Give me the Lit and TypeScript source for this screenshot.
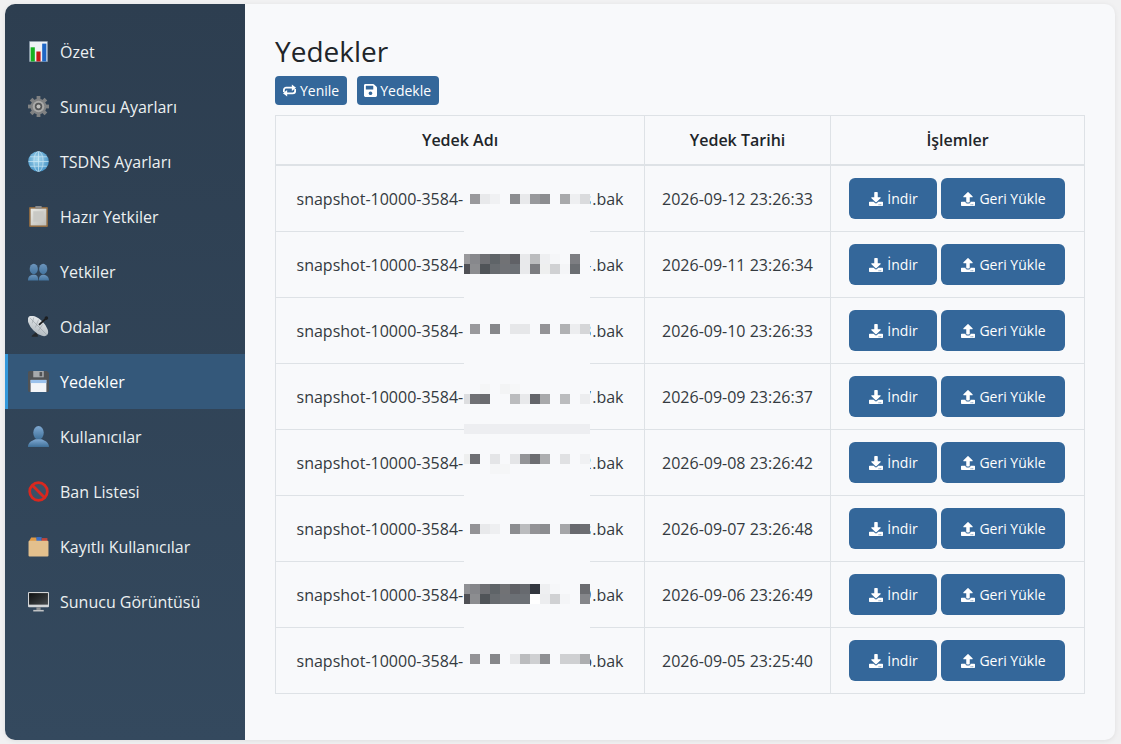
import { LitElement, html, css, svg } from "lit";
import { customElement } from "lit/decorators.js";

const I = {
  retweet: svg`<g fill="none" stroke="#fff" stroke-width="1.9"><path d="M2 9.500V7.500A2.500 2.500 0 0 1 4.500 5H11.500"/><path d="M14 6.500V8.500A2.500 2.500 0 0 1 11.500 11H4.500"/></g><path d="M10.500 1.500L15 5l-4.500 3.500zM5.500 7.500L1 11l4.500 3.500z" fill="#fff"/>`,
  save: svg`<path transform="scale(.0312)" d="M433.941 129.941l-83.882-83.882A48 48 0 0 0 316.118 32H48C21.49 32 0 53.49 0 80v352c0 26.51 21.49 48 48 48h352c26.51 0 48-21.49 48-48V163.882a48 48 0 0 0-14.059-33.941zM224 416c-35.346 0-64-28.654-64-64 0-35.346 28.654-64 64-64s64 28.654 64 64c0 35.346-28.654 64-64 64zm96-304.520V212c0 6.627-5.373 12-12 12H76c-6.627 0-12-5.373-12-12V108c0-6.627 5.373-12 12-12h228.520c3.183 0 6.235 1.264 8.485 3.515l3.480 3.480A11.996 11.996 0 0 1 320 111.480z"/>`,
  download: svg`<path transform="scale(.03125)" d="M216 0h80c13.300 0 24 10.700 24 24v168h87.700c17.800 0 26.700 21.500 14.100 34.100L269.700 378.300c-7.500 7.500-19.800 7.500-27.300 0L90.100 226.100c-12.600-12.600-3.700-34.100 14.100-34.100H192V24c0-13.300 10.700-24 24-24zm296 376v112c0 13.300-10.700 24-24 24H24c-13.300 0-24-10.700-24-24V376c0-13.300 10.700-24 24-24h146.700l49 49c20.100 20.100 52.500 20.100 72.600 0l49-49H488c13.300 0 24 10.700 24 24zm-124 88c0-11-9-20-20-20s-20 9-20 20 9 20 20 20 20-9 20-20zm64 0c0-11-9-20-20-20s-20 9-20 20 9 20 20 20 20-9 20-20z"/>`,
  upload: svg`<path transform="scale(.03125)" d="M296 384h-80c-13.300 0-24-10.700-24-24V192h-87.700c-17.800 0-26.700-21.500-14.100-34.100L242.300 5.700c7.500-7.500 19.800-7.500 27.300 0l152.200 152.200c12.600 12.600 3.700 34.100-14.100 34.100H320v168c0 13.300-10.700 24-24 24zm216-8v112c0 13.300-10.700 24-24 24H24c-13.300 0-24-10.700-24-24V376c0-13.300 10.700-24 24-24h136v8c0 30.900 25.100 56 56 56h80c30.900 0 56-25.100 56-56v-8h136c13.300 0 24 10.700 24 24zm-124 88c0-11-9-20-20-20s-20 9-20 20 9 20 20 20 20-9 20-20zm64 0c0-11-9-20-20-20s-20 9-20 20 9 20 20 20 20-9 20-20z"/>`,
};

const gearTeeth = [0, 45, 90, 135, 180, 225, 270, 315];

const defs = svg`<defs>
  <linearGradient id="person" x1="0" y1="0" x2="0" y2="1"><stop offset="0" stop-color="#7fa9d2"/><stop offset="1" stop-color="#3f7099"/></linearGradient>
  <linearGradient id="people" x1="0" y1="0" x2="0" y2="1"><stop offset="0" stop-color="#6d96bd"/><stop offset="1" stop-color="#44749f"/></linearGradient>
  <radialGradient id="globe" cx=".45" cy=".4" r=".65"><stop offset="0" stop-color="#a9d9ef"/><stop offset="1" stop-color="#3f8fc4"/></radialGradient>
  <linearGradient id="dish" x1="0" y1="0" x2="1" y2="1"><stop offset="0" stop-color="#eef1f3"/><stop offset="1" stop-color="#a9b2b8"/></linearGradient>
  <linearGradient id="paper" x1="0" y1="0" x2="1" y2="1"><stop offset="0" stop-color="#e9e9e4"/><stop offset="1" stop-color="#bcbcb8"/></linearGradient>
  <linearGradient id="screen" x1="0" y1="0" x2="1" y2="1"><stop offset="0" stop-color="#0e1011"/><stop offset="1" stop-color="#45494c"/></linearGradient>
</defs>`;

const nav: [string, unknown][] = [
  ["Özet", svg`<rect x="1" y="0" width="18" height="20" fill="#eef2f6"/><rect x="1.300" y=".3" width="17.400" height="19.400" fill="none" stroke="#66788a" stroke-width=".7"/><rect x="2.500" y="6" width="4" height="13.500" fill="#17b022"/><rect x="8" y="10" width="4" height="9.500" fill="#c71818"/><rect x="13.500" y="2.500" width="4" height="17" fill="#1f66c4"/>`],
  ["Sunucu Ayarları", svg`<g fill="#808283">${gearTeeth.map((a) => svg`<rect x="8.200" y="0" width="3.600" height="5" transform="rotate(${a} 10 10)"/>`)}<circle cx="10" cy="10" r="7.500"/></g><circle cx="10" cy="10" r="5.500" fill="#a9a9a7"/><circle cx="10" cy="10" r="3.500" fill="#535556"/><circle cx="10" cy="10" r="1.900" fill="#bfbfbd"/>`],
  ["TSDNS Ayarları", svg`<circle cx="10" cy="10" r="9.800" fill="url(#globe)"/><g fill="none" stroke="#d8eef8" stroke-width=".8" opacity=".75"><ellipse cx="10" cy="10" rx="4.400" ry="9.600"/><path d="M10 .5v19M.5 10h19M2 5.500h16M2 14.500h16"/></g>`],
  ["Hazır Yetkiler", svg`<rect x="1" y="1" width="18" height="19" rx="1" fill="#8e6b43"/><rect x="2.500" y="2.500" width="15" height="16" fill="url(#paper)"/><rect x="5" y="5" width="10" height="10" fill="#c9c9c5"/><rect x="7" y="0" width="6" height="2.500" fill="#8d8d8d"/>`],
  ["Yetkiler", svg`<g fill="url(#people)"><ellipse cx="5.500" cy="7.500" rx="3.900" ry="5"/><ellipse cx="14.500" cy="7.500" rx="3.900" ry="5"/><path d="M0 18.500c0-4 2.500-5.500 5.500-5.500S9.700 14.500 9.700 18.500zM10.300 18.500c0-4 2-5.500 4.200-5.500S20 14.500 20 18.500z"/></g>`],
  ["Odalar", svg`<path d="M8 15l-3.500 3.200c-1 .6-1.300 1.300-.8 1.600h5.600c.6-.5-.4-3.300-1.300-4.800z" fill="#25282b"/><ellipse cx="9.500" cy="9.500" rx="12.300" ry="6" transform="rotate(45 9.500 9.500)" fill="url(#dish)"/><g fill="none" stroke="#8f989e" stroke-width=".5"><path d="M2 2l16 16M5.500 1.500L4 7M10 3.500L7 11M14 8l-4 6"/></g><path d="M10.500 8.500L17 2.500" stroke="#1c1e20" stroke-width="1.700"/><circle cx="17.500" cy="2" r="1.700" fill="#1c1e20"/>`],
  ["Yedekler", svg`<path d="M0 1.500C0 .7.700 0 1.500 0H18l2 2v16.500c0 .8-.7 1.500-1.500 1.500h-17C.7 20 0 19.300 0 18.500z" fill="#505356"/><rect x="5" y="0" width="10" height="6" fill="#a6a9ac"/><rect x="11" y="1" width="2.500" height="4" fill="#505356"/><rect x="2.500" y="8.500" width="15" height="11.500" fill="#f3f5f8"/><rect x="2.500" y="8.500" width="15" height="3" fill="#9cc2ec"/>`],
  ["Kullanıcılar", svg`<g fill="url(#person)"><ellipse cx="10" cy="6.500" rx="5" ry="6.500"/><path d="M0 20c0-5 4-6 7-7.500h6C16 14 20 15 20 20z"/></g>`],
  ["Ban Listesi", svg`<circle cx="10" cy="10" r="8.400" fill="#3a5166" stroke="#d8281f" stroke-width="2.600"/><path d="M4.100 4.100l11.800 11.800" stroke="#d8281f" stroke-width="2.600"/>`],
  ["Kayıtlı Kullanıcılar", svg`<path d="M1 5l2-3.500h5L9 5z" fill="#e09a45"/><rect x="8" y="1" width="5" height="4" fill="#3b6fc4"/><rect x="13" y="2" width="5.500" height="3" fill="#c0463c"/><rect x=".5" y="4.500" width="19" height="15" rx="1" fill="#e3c08d"/>`],
  ["Sunucu Görüntüsü", svg`<rect x="0" y="1" width="20" height="14.500" rx="1" fill="#d2d4d6"/><rect x="1" y="2" width="18" height="11" fill="url(#screen)"/><rect x="8" y="15.500" width="4" height="2.500" fill="#8f9193"/><rect x="5" y="18" width="10" height="1.500" fill="#c0c2c4"/>`],
];

type Px = [number, number, string];
// Pixelated redaction blocks: absolute page coordinates, converted to patch offsets below.
const ROWS: { y: number; cells: [number, string][] }[] = [
  { y: 194, cells: [[470, "#99999c"], [480, "#e8e9eb"], [490, "#f0f1f3"], [510, "#8c8d90"], [520, "#e8e9eb"], [530, "#98999c"], [540, "#8c8d90"], [560, "#a8a9ab"], [570, "#eeeff1"], [580, "#dadbdd"]] },
  { y: 254, cells: [[464, "#99999c"], [470, "#87888c"], [480, "#6f7074"], [490, "#5f6468"], [500, "#717275"], [510, "#606166"], [520, "#e8e9eb"], [530, "#bbbcbe"], [540, "#eeeff1"], [550, "#f5f6f8"], [570, "#7d7e82"]] },
  { y: 264, cells: [[464, "#4f5055"], [470, "#8c8d90"], [480, "#505458"], [490, "#686c70"], [500, "#707276"], [510, "#6c7075"], [520, "#e8e9eb"], [530, "#7b7c80"], [540, "#eeefef"], [550, "#d0d1d3"], [560, "#f4f5f7"], [570, "#6b6e72"]] },
  { y: 324, cells: [[470, "#99999c"], [490, "#86878a"], [510, "#e6e7e9"], [520, "#e6e7e9"], [540, "#939396"], [560, "#b0b1b3"], [570, "#ecedef"], [580, "#d5d6d8"]] },
  { y: 384, cells: [[480, "#f5f6f7"], [500, "#f3f4f5"], [510, "#f6f7f8"]] },
  { y: 394, cells: [[464, "#dddee0"], [470, "#707175"], [480, "#6b6c70"], [510, "#bbbcbe"], [520, "#e8e9eb"], [530, "#64656a"], [540, "#a8a9ab"], [560, "#bbbcbe"], [580, "#ecedef"]] },
  { y: 454, cells: [[464, "#eeefef"], [470, "#6e6f73"], [490, "#e4e5e7"], [510, "#e4e5e7"], [520, "#939497"], [530, "#6c6d71"], [540, "#adaeb0"], [560, "#e0e1e3"], [580, "#f0f1f3"]] },
  { y: 464, cells: [[490, "#f5f6f7"], [500, "#f5f6f7"]] },
  { y: 524, cells: [[470, "#939396"], [480, "#e8e9eb"], [490, "#eeeff1"], [510, "#8c8d90"], [520, "#bbbcbe"], [530, "#939396"], [540, "#8c8d90"], [560, "#a5a6a8"], [570, "#68696e"], [580, "#6d6e72"]] },
  { y: 584, cells: [[464, "#8f9094"], [470, "#85868a"], [480, "#6f7074"], [490, "#5f6468"], [500, "#717275"], [510, "#606166"], [520, "#676a6f"], [530, "#33373f"], [540, "#eeeff1"], [550, "#f6f7f9"], [580, "#6b6c70"]] },
  { y: 594, cells: [[464, "#4f5055"], [470, "#8c8d90"], [480, "#505458"], [490, "#686c70"], [500, "#707276"], [510, "#6c7075"], [520, "#6c7075"], [530, "#ffffff"], [540, "#ecedef"], [550, "#d0d1d3"], [560, "#f4f5f7"], [580, "#85868a"]] },
  { y: 654, cells: [[470, "#939396"], [490, "#86878a"], [510, "#e6e7e9"], [520, "#bbbcbe"], [530, "#cfd0d2"], [540, "#8f9093"], [560, "#cfd0d2"], [570, "#cfd0d2"], [580, "#adaeb0"]] },
];
const PIXELS: Px[] = ROWS.flatMap((r) => r.cells.map(([x, c]) => [x - 464, r.y - 166, c] as Px));

const backups: [string, string][] = [
  ["s", "2026-09-12 23:26:33"],
  ["-", "2026-09-11 23:26:34"],
  ["3", "2026-09-10 23:26:33"],
  ["7", "2026-09-09 23:26:37"],
  ["2", "2026-09-08 23:26:42"],
  ["s", "2026-09-07 23:26:48"],
  ["9", "2026-09-06 23:26:49"],
  ["b", "2026-09-05 23:25:40"],
];

@customElement("app-root")
export class AppRoot extends LitElement {
  static styles = css`
    :host {
      display: block;
      height: 744px;
      padding: 4px 6px 4px 5px;
      box-sizing: border-box;
      background: #f1f1f2;
      font-family: "Open Sans", "Noto Sans", sans-serif;
      color: #212529;
      overflow: hidden;
    }
    .shell {
      display: flex;
      height: 736px;
      border-radius: 10px;
      overflow: hidden;
      background: #f8f9fb;
      box-shadow: 0 1px 5px rgba(0, 0, 0, 0.08);
    }
    aside {
      flex: 0 0 240px;
      padding-top: 20px;
      box-sizing: border-box;
      background: linear-gradient(180deg, #2d3e50, #34495e);
    }
    .item {
      display: flex;
      align-items: center;
      height: 55px;
      padding-left: 20px;
      gap: 11px;
      color: #ecf0f1;
      font-size: 16px;
      border-left: 3px solid transparent;
      box-sizing: border-box;
    }
    .item.active {
      background: #34587a;
      border-left-color: #3498db;
      color: #ffffff;
    }
    .item svg {
      width: 21px;
      height: 21px;
      flex: none;
    }
    main {
      flex: 1;
      padding: 29px 30px 0 30px;
      box-sizing: border-box;
    }
    h1 {
      margin: 0;
      font-size: 28px;
      font-weight: 400;
      line-height: 37px;
      color: #212529;
    }
    .tools {
      display: flex;
      gap: 10px;
      margin-top: 6px;
      margin-bottom: 10px;
    }
    .btn {
      display: inline-flex;
      align-items: center;
      justify-content: center;
      gap: 3px;
      box-sizing: border-box;
      background: #34679a;
      color: #fff;
      border-radius: 4px;
      white-space: nowrap;
    }
    .btn svg {
      fill: #fff;
      flex: none;
    }
    .tools .btn {
      height: 29px;
      padding: 0 8px 0 7px;
      font-size: 14px;
    }
    .tools .btn svg {
      width: 15px;
      height: 15px;
    }
    .tools .btn svg.disk {
      width: 13px;
    }
    .btn.lg {
      height: 41px;
      padding-left: 2px;
      font-size: 14px;
      border-radius: 6px;
      gap: 4px;
    }
    .btn.lg svg {
      width: 14px;
      height: 14px;
    }
    .btn.dl { width: 88px; }
    .btn.ul { width: 124px; }
    .table-wrap { position: relative; width: 810px; }
    table {
      width: 809px;
      table-layout: fixed;
      border-collapse: collapse;
      font-size: 16px;
    }
    th, td {
      border: 1px solid #dee2e6;
      text-align: center;
      padding: 0;
    }
    th {
      height: 48px;
      font-weight: 600;
      border-bottom-width: 2px;
    }
    td {
      height: 65px;
      color: #343a40;
    }
    .name { white-space: nowrap; }
    .gap {
      display: inline-block;
      width: 119px;
    }
    .tail {
      display: inline-block;
      width: 9px;
      margin-right: 1px;
      text-align: right;
    }
    .acts {
      display: flex;
      justify-content: center;
      gap: 4px;
      padding-right: 2px;
    }
    .patch {
      position: absolute;
      left: 189px;
      top: 51px;
      width: 126px;
      height: 526px;
      background: #f8f9fb;
    }
    .band {
      position: absolute;
      left: 0;
      right: 0;
      top: 258px;
      height: 10px;
      background: #edeef1;
    }
    .px {
      position: absolute;
      width: 10px;
      height: 10px;
    }
    .px.edge { width: 6px; }
  `;

  render() {
    return html`<div class="shell">
      <aside>
        ${nav.map(
          ([label, icon]) => html`<div class="item ${label === "Yedekler" ? "active" : ""}">
            <svg viewBox="0 0 20 20">${defs}${icon}</svg><span>${label}</span>
          </div>`
        )}
      </aside>
      <main>
        <h1>Yedekler</h1>
        <div class="tools">
          <span class="btn"><svg viewBox="0 0 16 16">${I.retweet}</svg>Yenile</span>
          <span class="btn"><svg class="disk" viewBox="0 0 14 16">${I.save}</svg>Yedekle</span>
        </div>
        <div class="table-wrap">
          <table>
            <colgroup><col style="width:369px" /><col style="width:186px" /><col style="width:254px" /></colgroup>
            <thead><tr><th>Yedek Adı</th><th>Yedek Tarihi</th><th>İşlemler</th></tr></thead>
            <tbody>
              ${backups.map(
                ([tail, d]) => html`<tr>
                  <td class="name">snapshot-10000-3584-<span class="gap"></span><span class="tail">${tail}</span>.bak</td>
                  <td>${d}</td>
                  <td>
                    <div class="acts">
                      <span class="btn lg dl"><svg viewBox="0 0 16 16">${I.download}</svg>İndir</span>
                      <span class="btn lg ul"><svg viewBox="0 0 16 16">${I.upload}</svg>Geri Yükle</span>
                    </div>
                  </td>
                </tr>`
              )}
            </tbody>
          </table>
          <div class="patch">
            <div class="band"></div>
            ${PIXELS.map(
              ([x, y, c]) => html`<span class="px ${x === 0 ? "edge" : ""}" style="left:${x}px;top:${y}px;background:${c}"></span>`
            )}
          </div>
        </div>
      </main>
    </div>`;
  }
}
